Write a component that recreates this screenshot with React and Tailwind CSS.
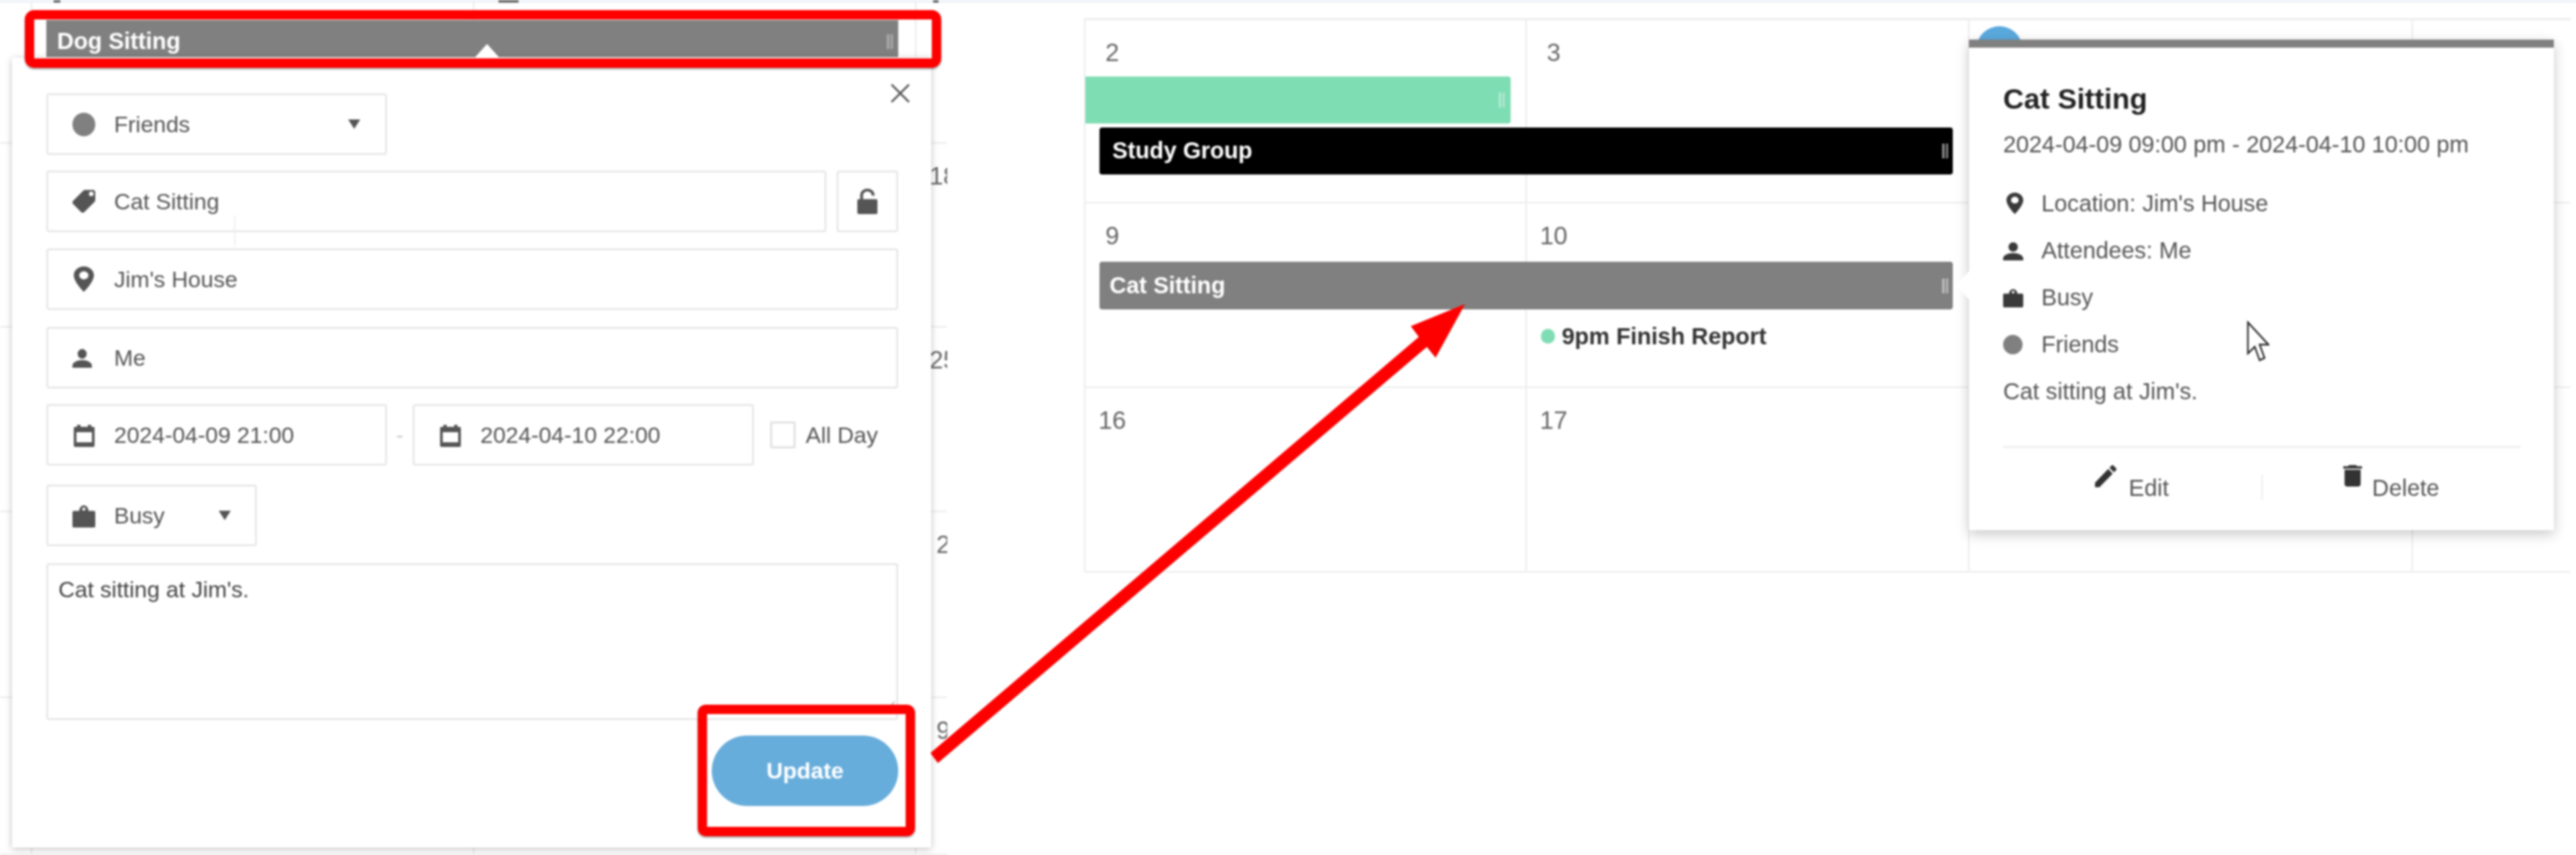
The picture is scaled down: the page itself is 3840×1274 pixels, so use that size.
const COL = ["col-start-1", "col-start-2", "col-start-3", "col-start-4"];

// icon glyphs, cropped tight so the size classes below are the real glyph size
function Glyph({ box, d, className, rotate }) {
  return (
    <svg viewBox={box} preserveAspectRatio="none" className={className} fill="currentColor">
      <path
        d={d}
        fillRule="evenodd"
        transform={rotate ? "rotate(90 12 12)" : undefined}
      />
    </svg>
  );
}

const TAG =
  "M21.41 11.58l-9-9C12.05 2.22 11.55 2 11 2H4c-1.1 0-2 .9-2 2v7c0 .55.22 1.05.59 1.42l9 9c.36.36.86.58 1.41.58.55 0 1.05-.22 1.41-.59l7-7c.37-.36.59-.86.59-1.41 0-.55-.23-1.06-.59-1.42zM5.5 7.5a2 2 0 1 1 0-4 2 2 0 0 1 0 4z";
const PIN =
  "M12 2C8.13 2 5 5.13 5 9c0 5.25 7 13 7 13s7-7.75 7-13c0-3.87-3.13-7-7-7zM12 5.8a3.2 3.2 0 1 0 0 6.4 3.2 3.2 0 0 0 0-6.4z";
const PERSON =
  "M15 1a7 7 0 1 1 0 14 7 7 0 0 1 0-14zM0 28v-3c0-5 8-8 15-8s15 3 15 8v3z";
const CALENDAR =
  "M4 5h3V2h5v3h11V2h5v3h3a2 2 0 0 1 2 2v26a2 2 0 0 1-2 2H4a2 2 0 0 1-2-2V7a2 2 0 0 1 2-2zM6 13v15h23V13z";
const BAG =
  "M10 10a7 8 0 0 1 14 0h8a2 2 0 0 1 2 2v20a2 2 0 0 1-2 2H2a2 2 0 0 1-2-2V12a2 2 0 0 1 2-2zM17 5a2.4 2.4 0 1 0 0 4.8 2.4 2.4 0 0 0 0-4.8z";
const EDIT =
  "M3 17.25V21h3.75L17.81 9.94l-3.75-3.75L3 17.25zM20.71 7.04c.39-.39.39-1.02 0-1.41l-2.34-2.34c-.39-.39-1.02-.39-1.41 0l-1.83 1.83 3.75 3.75 1.83-1.83z";
const TRASH =
  "M6 19c0 1.1.9 2 2 2h8c1.1 0 2-.9 2-2V7H6v12zM19 4h-3.5l-1-1h-5l-1 1H5v2h14V4z";

function Caret({ className }) {
  return (
    <svg viewBox="0 0 18 14" className={`w-[18px] h-[14px] ${className}`} fill="#555">
      <polygon points="0,0 18,0 9,14" />
    </svg>
  );
}

function Handle({ className }) {
  return (
    <div className={`flex gap-[2px] w-[9px] h-[22px] ${className}`}>
      <div className="flex-1 bg-current" />
      <div className="flex-1 bg-current" />
    </div>
  );
}

function DayNum({ n }) {
  return (
    <div className="w-[80px] h-[98px] flex items-center justify-center text-[37px] text-[#666]">
      {n}
    </div>
  );
}

function Week({ cols, rows, days, children }) {
  return (
    <div className={`grid ${cols} ${rows}`}>
      {days.map((d, i) => (
        <div
          key={i}
          className={`${COL[i]} row-span-full border-b-2 border-[#ebebeb] ${i > 0 ? "border-l-2" : ""}`}
        >
          {d && <DayNum n={d} />}
        </div>
      ))}
      {children}
    </div>
  );
}

function Field({ icon, children, className }) {
  return (
    <div
      className={`flex items-center h-[92px] pl-[36px] border-[3px] border-[#e8e8e8] rounded-[4px] text-[#555] ${className}`}
    >
      <div className="w-[62px] flex items-center">{icon}</div>
      {children}
    </div>
  );
}

function EventEditor() {
  const cal = <Glyph box="0 0 35 35" d={CALENDAR} className="w-[35px] h-[35px]" />;
  return (
    <div className="absolute left-[18px] top-[82px] w-[1370px] h-[1177px] flex flex-col bg-white pt-[53px] pl-[51px] pr-[49px] shadow-[0_2px_10px_rgba(0,0,0,0.25)] text-[34px] text-[#555]">
      {/* pointer up to the event bar */}
      <svg viewBox="0 0 36 20" className="absolute left-[690px] top-[-21px] w-[36px] h-[21px]" fill="#fff">
        <polygon points="18,0 36,20 0,20" />
      </svg>
      <svg viewBox="0 0 30 30" className="absolute right-[31px] top-[38px] w-[30px] h-[30px]" stroke="#555" strokeWidth="3">
        <path d="M2 2 28 28M28 2 2 28" />
      </svg>

      <Field
        className="w-[508px] mb-[23px]"
        icon={<div className="w-[34px] h-[35px] rounded-full bg-[#808080]" />}
      >
        Friends
        <Caret className="ml-auto mr-[37px]" />
      </Field>

      <div className="flex gap-[15px] mb-[24px]">
        <Field
          className="relative flex-1"
          icon={<Glyph box="2 2 20 20" d={TAG} rotate className="w-[34px] h-[34px]" />}
        >
          Cat Sitting
          {/* text cursor left in the capture */}
          <div className="absolute left-[277px] top-[64px] w-[2px] h-[46px] bg-[#eeeeee]" />
        </Field>
        <div className="flex items-center justify-center w-[92px] h-[92px] border-[3px] border-[#e8e8e8] rounded-[4px]">
          <svg viewBox="0 0 14 18" preserveAspectRatio="none" className="w-[30px] h-[38px]">
            <rect x="0" y="7.5" width="14" height="10.5" rx="1" fill="#555" />
            <path d="M3 8V4.6a4 3.6 0 0 1 8 0V5" fill="none" stroke="#555" strokeWidth="2" />
          </svg>
        </div>
      </div>

      <Field
        className="mb-[25px]"
        icon={<Glyph box="5 2 14 20" d={PIN} className="w-[30px] h-[38px] ml-[2px]" />}
      >
        Jim's House
      </Field>

      <Field
        className="mb-[23px]"
        icon={<Glyph box="0 0 30 28" d={PERSON} className="w-[29px] h-[29px]" />}
      >
        Me
      </Field>

      <div className="flex items-center mb-[28px]">
        <Field className="w-[508px]" icon={cal}>
          2024-04-09 21:00
        </Field>
        <div className="w-[38px] text-center text-[#ccc]">-</div>
        <Field className="w-[509px]" icon={cal}>
          2024-04-10 22:00
        </Field>
        <div className="ml-[24px] w-[38px] h-[40px] border-[3px] border-[#e0e0e0] rounded-[3px]" />
        <div className="ml-[15px]">All Day</div>
      </div>

      <Field
        className="w-[314px] mb-[25px]"
        icon={<Glyph box="0 0 34 34" d={BAG} className="w-[34px] h-[35px]" />}
      >
        Busy
        <Caret className="ml-auto mr-[36px]" />
      </Field>

      <div className="relative h-[234px] mb-[23px] px-[15px] pt-[16px] border-[3px] border-[#e8e8e8] rounded-[4px] text-[#444] leading-[40px]">
        Cat sitting at Jim's.
        <svg viewBox="0 0 14 20" className="absolute right-[2px] bottom-[6px] w-[14px] h-[20px]" stroke="#bbb" strokeWidth="2">
          <path d="M1 19 13 1" />
        </svg>
      </div>

      <div className="self-end flex items-center justify-center w-[278px] h-[105px] rounded-[53px] bg-[#67addb] text-white font-bold">
        Update
      </div>
    </div>
  );
}

function EventDetail() {
  const rows = [
    { icon: <Glyph box="5 2 14 20" d={PIN} className="w-[25px] h-[32px] ml-[5px]" />, text: "Location: Jim's House" },
    { icon: <Glyph box="0 0 30 28" d={PERSON} className="w-[30px] h-[28px] mt-[2px]" />, text: "Attendees: Me" },
    { icon: <Glyph box="0 0 34 34" d={BAG} className="w-[30px] h-[29px]" />, text: "Busy" },
    { icon: <div className="w-[29px] h-[29px] rounded-full bg-[#808080]" />, text: "Friends" },
  ];
  return (
    <div className="absolute left-[2935px] top-[59px] w-[872px] h-[731px] bg-white border-t-[12px] border-[#808080] pl-[51px] pr-[50px] shadow-[0_6px_18px_rgba(0,0,0,0.22)] text-[34.7px] text-[#555]">
      <svg viewBox="0 0 20 44" className="absolute left-[-19px] top-[332px] w-[20px] h-[44px]" fill="#fff">
        <polygon points="20,0 0,22 20,44" />
      </svg>
      <div className="mt-[41px] h-[70px] flex items-center text-[43px] font-bold text-[#222]">
        Cat Sitting
      </div>
      <div className="mt-[9px] h-[48px] flex items-center">
        2024-04-09 09:00 pm - 2024-04-10 10:00 pm
      </div>
      <div className="mt-[29px]">
        {rows.map((r) => (
          <div key={r.text} className="h-[70px] flex items-center">
            <div className="w-[57px] flex items-center text-[#3a3a3a]">{r.icon}</div>
            {r.text}
          </div>
        ))}
        <div className="h-[70px] flex items-center">Cat sitting at Jim's.</div>
      </div>
      <div className="mt-[47px] h-[2px] bg-[#e6e6e6]" />
      <div className="flex items-center h-[122px] pb-[4px]">
        <div className="flex-1 flex justify-center gap-[18px]">
          <Glyph box="3 3 18 18" d={EDIT} className="w-[32px] h-[33px] -mt-[6px] text-[#333]" />
          <span className="mt-[2px]">Edit</span>
        </div>
        <div className="w-[2px] h-[38px] bg-[#ececec]" />
        <div className="flex-1 flex justify-center gap-[15px]">
          <Glyph box="5 3 14 18" d={TRASH} className="w-[28px] h-[32px] -mt-[6px] text-[#333]" />
          <span className="mt-[2px]">Delete</span>
        </div>
      </div>
    </div>
  );
}

export default function App() {
  const leftCols = "grid-cols-[46px_659px_659px_48px]";
  const rightCols = "grid-cols-[656px_660px_661px_237px]";
  return (
    <div className="relative w-[3840px] h-[1274px] overflow-hidden bg-white font-['Liberation_Sans',Arial,sans-serif] blur-[1.4px]">
      {/* sliver of the page header left at the top of both captures */}
      <div className="flex h-[4px] bg-[#eef2f8]">
        <div className="ml-[80px] w-[10px] bg-[#666]" />
        <div className="ml-[653px] w-[30px] bg-[#666]" />
        <div className="ml-[618px] w-[8px] bg-[#666]" />
      </div>

      <div className="flex">
        {/* left capture: month view with the edit form */}
        <div className="relative w-[1412px] h-[1270px] overflow-hidden">
          <Week cols={leftCols} rows="grid-rows-[210px]" days={[null, null, null, null]}>
            <div className="col-start-2 col-span-2 row-start-1 mt-[26px] ml-[23px] mr-[25px] h-[55px] flex items-center pl-[16px] pt-[8px] bg-[#808080] text-white font-bold text-[34.5px]">
              Dog Sitting
              <Handle className="ml-auto mr-[8px] text-[#aaaaaa]" />
            </div>
          </Week>
          <Week cols={leftCols} rows="grid-rows-[274px]" days={[null, null, null, "18"]} />
          <Week cols={leftCols} rows="grid-rows-[275px]" days={[null, null, null, "25"]} />
          <Week cols={leftCols} rows="grid-rows-[277px]" days={[null, null, null, "2"]} />
          <Week cols={leftCols} rows="grid-rows-[234px]" days={[null, null, null, "9"]} />
          <EventEditor />
        </div>

        {/* right capture: month view with the event detail */}
        <div className="ml-[204px] mt-[23px] h-fit border-t-[3px] border-l-2 border-[#ebebeb]">
          <Week cols={rightCols} rows="grid-rows-[84px_70px_76px_43px]" days={["2", "3", null, null]}>
            <div className="col-start-3 row-start-1 row-span-2 mt-[9px] ml-[12px] w-[69px] h-[69px] rounded-full bg-[#5aa9dd]" />
            <div className="col-start-1 row-start-2 mr-[22px] flex items-center justify-end pr-[9px] rounded-r-[4px] bg-[#7fddb4] text-[#aee9cf]">
              <Handle />
            </div>
            <div className="col-start-1 col-span-2 row-start-3 mt-[6px] ml-[21px] mr-[23px] flex items-center pl-[19px] rounded-[4px] bg-black text-white font-bold text-[34.5px]">
              Study Group
              <Handle className="ml-auto mr-[7px] text-[#888888]" />
            </div>
          </Week>
          <Week cols={rightCols} rows="grid-rows-[87px_71px_80px_37px]" days={["9", "10", null, null]}>
            <div className="col-start-1 col-span-2 row-start-2 ml-[21px] mr-[23px] flex items-center pl-[15px] rounded-[4px] bg-[#808080] text-white font-bold text-[34.5px]">
              Cat Sitting
              <Handle className="ml-auto mr-[7px] text-[#bbbbbb]" />
            </div>
            <div className="col-start-2 row-start-3 flex items-center pl-[23px] font-bold text-[34.8px] text-[#333]">
              <div className="w-[21px] h-[22px] mr-[10px] rounded-full bg-[#7fddb4]" />
              9pm Finish Report
            </div>
          </Week>
          <Week cols={rightCols} rows="grid-rows-[275px]" days={["16", "17", null, null]} />
        </div>
      </div>

      <EventDetail />

      {/* mouse pointer from the capture */}
      <svg viewBox="0 0 12 19" preserveAspectRatio="none" className="absolute left-[3348px] top-[477px] w-[35px] h-[63px]" fill="#fff" stroke="#222" strokeWidth="0.8">
        <path d="M1 1V15L4.5 12L7 18L9.5 17L7 11H11.5Z" />
      </svg>

      {/* red annotations */}
      <div className="absolute left-[37px] top-[15px] w-[1366px] h-[86px] border-[14px] border-[#fe0000] rounded-[14px] shadow-[0_2px_3px_rgba(0,0,0,0.4)]" />
      <div className="absolute left-[1040px] top-[1050px] w-[324px] h-[196px] border-[14px] border-[#fe0000] rounded-[12px] shadow-[0_2px_3px_rgba(0,0,0,0.4)]" />
      <svg viewBox="0 0 3840 1274" className="absolute left-0 top-0 w-[3840px] h-[1274px] pointer-events-none" fill="#fe0000">
        <polygon points="1387,1122 2115,502 2103,486 2184,453 2140,533 2127,517 1398,1137" />
      </svg>
    </div>
  );
}
